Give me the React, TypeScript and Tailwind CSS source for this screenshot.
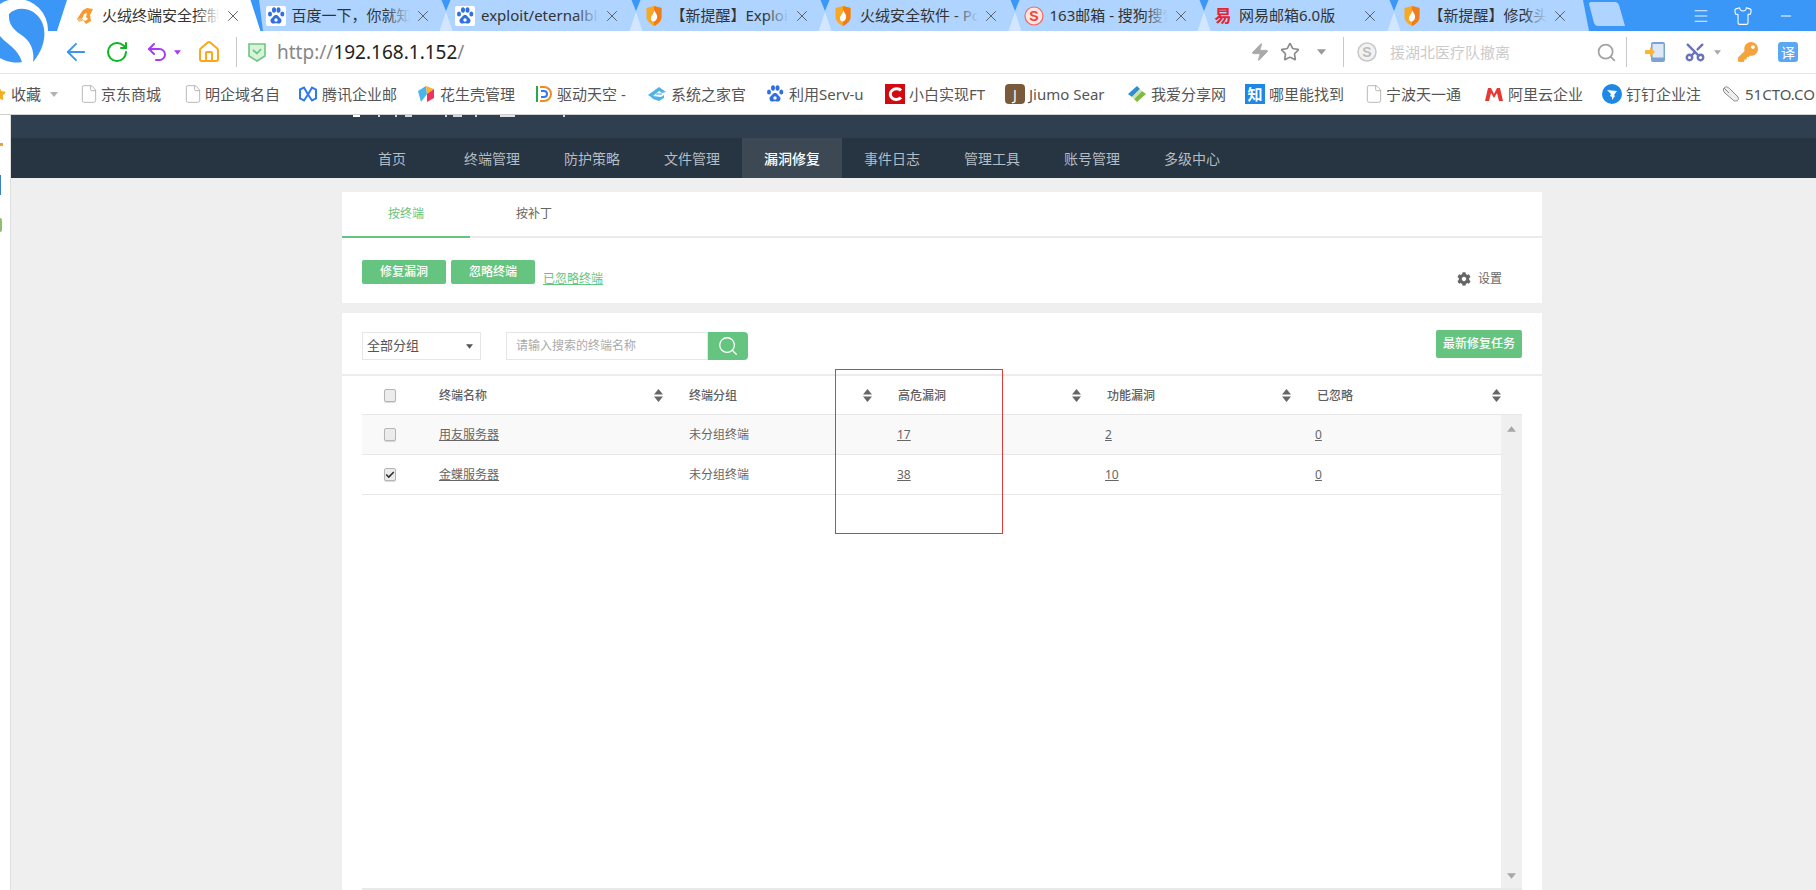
import { ArrowLeft, Check, File, Home, Menu, Minus, RotateCw, Scissors, Search, Shirt, Star, Undo2, X, Zap } from "lucide-react";
import { FaCog, FaKey } from "react-icons/fa";
import type { ReactNode } from "react";

const Paw = () => (
  <svg viewBox="0 0 20 20" className="w-5 h-5 shrink-0">
    <rect width="20" height="20" rx="2" fill="#fff" />
    <g fill="#2f6fe0">
      <ellipse cx="4" cy="8" rx="2" ry="2.6" />
      <ellipse cx="8" cy="4" rx="2" ry="2.8" />
      <ellipse cx="12.5" cy="4" rx="2" ry="2.8" />
      <ellipse cx="16.3" cy="8" rx="2" ry="2.6" />
      <path d="M10 9c-2.5 0-3 2.500-4.500 3.500C3.500 14 4.500 18 8 17.500c1.500-.2 2.500-.2 4 0 3.500.5 4.500-3.500 2.500-5C13 11.500 12.500 9 10 9z" />
    </g>
    <circle cx="10" cy="14" r="1.700" fill="#fff" />
  </svg>
);

const Flame = ({ blur }: { blur?: boolean }) => (
  <svg viewBox="0 0 18 20" className="w-[18px] h-5 shrink-0 mr-[2px]">
    {blur ? (
      <>
        <path d="M1 13 7 4l4-2 6 1-3 6 1 6-5 3-3-4-4 1z" fill="#fb9a2c" />
        <path d="M6 13l2-5 3-1-1 4 2 2-3 2z" fill="#fff" />
        <path d="M1 13l4-1 2 3-4 1z" fill="#f7c07a" />
      </>
    ) : (
      <>
        <path d="M1.500 2 9 0l7.500 2v9c0 4-3.500 7-7.500 9-4-2-7.500-5-7.500-9z" fill="#f9a825" />
        <path d="M16.500 2v9c0 4-3.500 7-7.500 9V0z" fill="#ef7d1a" />
        <path d="M9.500 4c.5 3 3.500 4.500 2.500 8-.5 2-2 3.500-3.500 3.500S5.500 14 6 11.500C6.500 9 9 7.500 9.500 4z" fill="#fff" />
      </>
    )}
  </svg>
);

const SogouMail = () => (
  <svg viewBox="0 0 20 20" className="w-5 h-5 shrink-0">
    <circle cx="10" cy="10" r="9" fill="#fde5e3" stroke="#f2645c" strokeWidth="1.200" />
    <text x="10" y="15" textAnchor="middle" fontSize="14" fontWeight="700" fill="#f0423a" fontFamily="Liberation Sans">S</text>
  </svg>
);

const NetEase = () => (
  <span className="w-5 shrink-0 text-center text-[17px] font-bold leading-5 text-[#e5232f]">易</span>
);

const tabs: { title: string; icon: ReactNode; fade: string }[] = [
  { title: "火绒终端安全控制台", icon: <Flame blur />, fade: "to-white" },
  { title: "百度一下，你就知道", icon: <Paw />, fade: "to-[#aed4ff]" },
  { title: "exploit/eternalblue", icon: <Paw />, fade: "to-[#aed4ff]" },
  { title: "【新提醒】Exploit", icon: <Flame />, fade: "to-[#aed4ff]" },
  { title: "火绒安全软件 - Power", icon: <Flame />, fade: "to-[#aed4ff]" },
  { title: "163邮箱 - 搜狗搜索", icon: <SogouMail />, fade: "to-[#aed4ff]" },
  { title: "网易邮箱6.0版", icon: <NetEase />, fade: "to-[#aed4ff]" },
  { title: "【新提醒】修改头像", icon: <Flame />, fade: "to-[#aed4ff]" },
];

const DocIcon = () => <File className="w-5 h-[22px] shrink-0 -mr-[2px] text-[#a9a9a9]" strokeWidth={1} />;

const bookmarks: { label: string; icon: ReactNode; cls: string }[] = [
  { label: "京东商城", icon: <DocIcon />, cls: "w-[104px]" },
  { label: "明企域名自", icon: <DocIcon />, cls: "w-[115px]" },
  {
    label: "腾讯企业邮",
    icon: (
      <svg viewBox="0 0 20 20" className="w-5 h-5 shrink-0" fill="none" stroke="#2f7cf0" strokeWidth="2">
        <path d="M2 5.500 6 3.500l4 7 4-7 4 2v9l-4 2-4-6-4 6-4-2z" />
      </svg>
    ),
    cls: "w-[118px]",
  },
  {
    label: "花生壳管理",
    icon: (
      <svg viewBox="0 0 20 20" className="w-5 h-5 shrink-0">
        <path d="M2 7 10 2l1 8-6 8z" fill="#4ab4ee" />
        <path d="M10 2l8 3-7 5z" fill="#f7b52c" />
        <path d="M18 5v9l-7 4V10z" fill="#f2305f" />
      </svg>
    ),
    cls: "w-[117px]",
  },
  {
    label: "驱动天空 -",
    icon: (
      <svg viewBox="0 0 20 20" className="w-5 h-5 shrink-0" fill="none" strokeWidth="2">
        <path d="M4 2v16" stroke="#2aa84a" />
        <path d="M7 3h4a7 7 0 0 1 0 14H7" stroke="#f08a24" />
        <path d="M8 7h3a3 3 0 0 1 0 6H8" stroke="#2f7cf0" />
      </svg>
    ),
    cls: "w-[114px]",
  },
  {
    label: "系统之家官",
    icon: (
      <svg viewBox="0 0 20 20" className="w-5 h-5 shrink-0">
        <path d="M1 11 12 3l7 5-4 1-3-2-6 5 8 1 3-2v3l-5 3-6-2-2-2z" fill="#4eb3e8" />
        <path d="M9 9h6v2H9z" fill="#9bd3ef" />
      </svg>
    ),
    cls: "w-[118px]",
  },
  { label: "利用Serv-u", icon: <Paw />, cls: "w-[120px]" },
  {
    label: "小白实现FT",
    icon: (
      <svg viewBox="0 0 20 20" className="w-5 h-5 shrink-0">
        <rect width="20" height="20" fill="#d10a12" />
        <path d="M16 6.500C14 4 9.500 4 7 6.500s-2 5.500 0 7.500 7 2 9-.5" fill="none" stroke="#fff" strokeWidth="3" />
      </svg>
    ),
    cls: "w-[120px]",
  },
  {
    label: "Jiumo Sear",
    icon: (
      <span className="flex w-5 h-5 shrink-0 items-center justify-center rounded-sm bg-[#7a5a3a] text-[14px] text-white">J</span>
    ),
    cls: "w-[122px]",
  },
  {
    label: "我爱分享网",
    icon: (
      <svg viewBox="0 0 20 20" className="w-5 h-5 shrink-0">
        <path d="M1 10 10 2l3 3-8 8z" fill="#2e8fd0" />
        <path d="M7 15l8-8 4 3-9 8z" fill="#7dbb42" />
        <path d="M5 13l8-8 2 2-8 8z" fill="#cfe3a8" />
      </svg>
    ),
    cls: "w-[118px]",
  },
  {
    label: "哪里能找到",
    icon: <span className="flex w-5 h-5 shrink-0 items-center justify-center bg-[#1e88e5] text-[15px] font-bold text-white">知</span>,
    cls: "w-[119px]",
  },
  { label: "宁波天一通", icon: <DocIcon />, cls: "w-[120px]" },
  {
    label: "阿里云企业",
    icon: (
      <svg viewBox="0 0 20 20" className="w-5 h-5 shrink-0" fill="#e53935">
        <path d="M1 17 4 4h3l3 6 3-6h3l3 13h-4l-2-8-3 5-3-5-2 8z" />
      </svg>
    ),
    cls: "w-[118px]",
  },
  {
    label: "钉钉企业注",
    icon: (
      <svg viewBox="0 0 20 20" className="w-5 h-5 shrink-0">
        <circle cx="10" cy="10" r="10" fill="#1e88e5" />
        <path d="M5 6l10 1-3 4 1 1-3 4v-3l-2-1 1-2z" fill="#fff" />
      </svg>
    ),
    cls: "w-[119px]",
  },
  {
    label: "51CTO.COM",
    icon: (
      <svg viewBox="0 0 20 20" className="w-5 h-5 shrink-0" fill="#eee" stroke="#888" strokeWidth="1">
        <path d="M3 4c2-2 4-1 6 1l8 8c1 2 0 4-2 4-1 0-2 0-3-1L4 9C2 7 2 5 3 4z" />
        <path d="M3 4l5 5" />
      </svg>
    ),
    cls: "w-[100px]",
  },
];

const navItems = ["首页", "终端管理", "防护策略", "文件管理", "漏洞修复", "事件日志", "管理工具", "账号管理", "多级中心"];

// tails of the title that is scrolled away under the browser chrome
const titleBits = [
  "ml-[342px] w-[7px] bg-white",
  "ml-[18px] w-[2px] bg-[#cfd8e0]",
  "ml-[15px] w-[2px] bg-[#cfd8e0]",
  "ml-[8px] w-[7px] bg-[#cfd8e0]",
  "ml-[33px] w-[2px] bg-[#cfd8e0]",
  "ml-[6px] w-[9px] bg-[#cfd8e0]",
  "ml-[13px] w-[2px] bg-[#cfd8e0]",
  "ml-[23px] w-[15px] bg-[#dfe3e6]",
  "ml-[48px] w-[2px] bg-[#cfd8e0]",
];

const rows = [
  { name: "用友服务器", group: "未分组终端", high: "17", func: "2", ignored: "0", checked: false, bg: "bg-[#f9f9f9]" },
  { name: "金蝶服务器", group: "未分组终端", high: "38", func: "10", ignored: "0", checked: true, bg: "bg-white" },
];

const Caret = ({ className }: { className: string }) => (
  <svg viewBox="0 0 8 5" className={className} fill="currentColor">
    <path d="M0 0h8L4 5z" />
  </svg>
);

const SortIcon = () => (
  <svg viewBox="0 0 9 13" className="w-[9px] h-[13px] shrink-0" fill="#666">
    <path d="M4.500 0 9 5.500H0zM0 7.500h9L4.500 13z" />
  </svg>
);

const CheckBox = ({ checked }: { checked?: boolean }) => (
  <div className="flex w-[12px] h-[13px] items-center justify-center rounded-[2px] border border-[#b5b5b5] bg-[#ececec] shadow-[0_1px_1px_rgba(0,0,0,0.15)]">
    {checked && <Check className="w-[10px] h-[10px] text-[#333]" strokeWidth={4} />}
  </div>
);

const HeadCell = ({ label, cls }: { label: string; cls: string }) => (
  <div className={`flex items-center justify-between pr-[14px] ${cls}`}>
    <span className="font-medium text-[#5f5f5f]">{label}</span>
    <SortIcon />
  </div>
);

const App = () => {
  return (
    <div className="relative flex h-screen flex-col overflow-hidden bg-white font-['Noto_Sans','Noto_Sans_CJK_SC',sans-serif]">
      {/* Logo */}
      <svg viewBox="0 0 52 66" className="absolute left-0 top-0 z-20 w-[52px] h-[66px]">
        <circle cx="17" cy="30" r="31" fill="#fff" />
        <path d="M9 14C16 6 34 6 42 22c6 14 0 30-9 40 2-12-3-22-13-28C14 30 8 24 9 14z" fill="#3b96f6" />
        <path d="M0 36c6 8 18 12 22 26-10 2-18-2-22-4z" fill="#3b96f6" />
      </svg>

      {/* Tabs */}
      <div className="flex h-[31px] shrink-0 bg-[#3a96f7] pl-[67px] text-[15px] text-[#333]">
        {tabs.map((tab, i) => (
          <div key={i} className={`relative flex w-[189.5px] shrink-0 items-center pl-[9px] ${i === 0 ? "bg-white" : "bg-[#aed4ff]"}`}>
            {i === 0 && (
              <svg viewBox="0 0 10 31" className="absolute right-full top-0 w-[10px] h-[31px]">
                <path d="M0 31 10 0v31z" fill="#fff" />
              </svg>
            )}
            {tab.icon}
            <div className="relative ml-[6px] w-[118px] overflow-hidden whitespace-nowrap">
              {tab.title}
              <div className={`absolute inset-y-0 right-0 w-[24px] bg-linear-to-r from-transparent ${tab.fade}`} />
            </div>
            <X className="ml-[4px] w-[18px] h-[18px] text-[#555]" strokeWidth={1.200} />
            {i === 0 ? (
              <svg viewBox="0 0 20 31" className="absolute left-full top-0 z-10 -ml-[10px] w-5 h-[31px]">
                <path d="M0 0h3.500l10 31H0z" fill="#fff" />
                <path d="M3.500 0H12l4 31h-2.500z" fill="#3a96f7" />
              </svg>
            ) : i < tabs.length - 1 ? (
              <svg viewBox="0 0 20 31" className="absolute left-full top-0 z-10 -ml-[10px] w-5 h-[31px]">
                <path d="M5.500 0h9L10 11z" fill="#3a96f7" />
                <path d="M10 12l6.500 19h-13z" fill="#d2e6ff" />
              </svg>
            ) : (
              <svg viewBox="0 0 8 31" className="absolute left-full top-0 w-2 h-[31px]">
                <path d="M0 0v31h6z" fill="#aed4ff" />
              </svg>
            )}
          </div>
        ))}
        <svg viewBox="0 0 38 24" className="ml-[6px] mt-[2px] w-[38px] h-[24px] shrink-0">
          <path d="M2 0h24c2 0 3 1 4 3l6 21H9c-2 0-3-1-4-3L0 2c0-1 1-2 2-2z" fill="#aed4ff" />
        </svg>
        <div className="ml-auto flex items-center pr-[22px] text-white">
          <Menu className="w-[18px] h-[18px]" strokeWidth={1.200} />
          <Shirt className="ml-[23px] w-[20px] h-[20px]" strokeWidth={1.300} />
          <Minus className="ml-[25px] w-[16px] h-[16px]" strokeWidth={1.500} />
        </div>
      </div>

      {/* Toolbar */}
      <div className="flex h-[43px] shrink-0 items-center border-b border-[#e3e3e3] pl-[62px] pr-[18px]">
        <ArrowLeft className="w-[28px] h-[28px] shrink-0 text-[#3b95f5]" strokeWidth={1.600} />
        <RotateCw className="ml-[15px] w-[24px] h-[24px] shrink-0 text-[#0cb61f]" strokeWidth={2} />
        <Undo2 className="ml-[16px] w-[24px] h-[24px] shrink-0 text-[#a63cf2]" strokeWidth={2} />
        <Caret className="ml-[5px] w-[7px] h-[5px] shrink-0 text-[#a63cf2]" />
        <Home className="ml-[16px] w-[24px] h-[24px] shrink-0 text-[#ffa414]" strokeWidth={1.900} />
        <div className="ml-[15px] h-[30px] w-px shrink-0 bg-[#c9c9c9]" />
        <svg viewBox="0 0 18 20" className="ml-[11px] w-[18px] h-[20px] shrink-0">
          <path d="M1 2h16v12l-8 5-8-5z" fill="#d9f2dc" stroke="#6cc77c" strokeWidth="1.600" />
          <path d="M5 8l4 3.500L13 7" fill="none" stroke="#6cc77c" strokeWidth="1.800" />
        </svg>
        <div className="ml-[11px] w-[973px] shrink-0 text-[19px] text-[#222]">
          <span className="text-[#888]">http://</span>192.168.1.152<span className="text-[#888]">/</span>
        </div>
        <Zap className="w-[20px] h-[20px] shrink-0 text-[#a9a9a9]" fill="#a9a9a9" strokeWidth={1} />
        <Star className="ml-[10px] w-[20px] h-[20px] shrink-0 text-[#8c8c8c]" strokeWidth={2} />
        <Caret className="ml-[17px] w-[9px] h-[6px] shrink-0 text-[#9a9a9a]" />
        <div className="ml-[17px] h-[30px] w-px shrink-0 bg-[#c9c9c9]" />
        <svg viewBox="0 0 20 20" className="ml-[13px] w-5 h-5 shrink-0">
          <circle cx="10" cy="10" r="9" fill="#f2f2f2" stroke="#c8c8c8" strokeWidth="1.500" />
          <text x="10" y="15" textAnchor="middle" fontSize="14" fontWeight="700" fill="#bdbdbd" fontFamily="Liberation Sans">S</text>
        </svg>
        <div className="ml-[13px] flex-1 text-[15px] text-[#cbcbcb]">援湖北医疗队撤离</div>
        <Search className="w-[21px] h-[21px] shrink-0 text-[#a3a3a3]" strokeWidth={2} />
        <div className="ml-[9px] h-[30px] w-px shrink-0 bg-[#c9c9c9]" />
        <svg viewBox="0 0 20 20" className="ml-[18px] w-5 h-5 shrink-0">
          <rect x="6" y="0" width="14" height="20" rx="2" fill="#7ba2d3" />
          <rect x="7.500" y="2" width="11" height="13.500" fill="#dce8f7" />
          <path d="M0 8h5V5l5 5-5 5v-3H0z" fill="#f7b53c" />
        </svg>
        <Scissors className="ml-[19px] w-[22px] h-[22px] shrink-0 text-[#6a73bd] -rotate-90" strokeWidth={2.600} />
        <Caret className="ml-[8px] w-[7px] h-[5px] shrink-0 text-[#a9a9a9]" />
        <FaKey className="ml-[17px] w-[20px] h-[20px] shrink-0 text-[#f5a33c]" />
        <div className="ml-[20px] flex w-5 h-5 shrink-0 items-center justify-center rounded-[3px] bg-[#5aa7f4] text-[14px] text-white">译</div>
      </div>

      {/* Bookmarks */}
      <div className="flex h-[41px] shrink-0 items-center border-b border-[#cfcfcf] text-[15px] text-[#555]">
        <Star className="-ml-[8px] w-[14px] h-[14px] shrink-0 text-[#f2b01e]" fill="#f2b01e" />
        <span className="ml-[5px] shrink-0">收藏</span>
        <Caret className="ml-[9px] mr-[21px] w-[8px] h-[5px] shrink-0 text-[#b3b3b3]" />
        {bookmarks.map((b) => (
          <div key={b.label} className={`flex shrink-0 items-center gap-[4px] whitespace-nowrap ${b.cls}`}>
            {b.icon}
            <span>{b.label}</span>
          </div>
        ))}
      </div>

      {/* Page */}
      <div className="flex min-h-0 flex-1">
        <div className="relative w-[11px] shrink-0 border-r border-[#dedede] bg-white">
          <div className="absolute left-0 top-[28px] h-[3px] w-[3px] bg-[#e8a33d]" />
          <div className="absolute left-0 top-[60px] h-[20px] w-[1px] bg-[#3b82c4]" />
          <div className="absolute left-0 top-[103px] h-[14px] w-[2px] rounded-r-full bg-[#8ebf6f]" />
        </div>
        <div className="flex min-w-0 flex-1 flex-col bg-[#efefef] text-[12px] text-[#666]">
          {/* Header */}
          <div className="flex h-[23px] shrink-0 items-start bg-[#2f3f4f]">
            {titleBits.map((cls, i) => (
              <div key={i} className={`h-[2px] ${cls}`} />
            ))}
          </div>
          <div className="flex h-[40px] shrink-0 bg-[#273441] pl-[331px] text-[14px] text-[#b4bcc4]">
            {navItems.map((item) => (
              <div
                key={item}
                className={`flex w-[100px] items-center justify-center ${item === "漏洞修复" ? "bg-[#3c4853] font-medium text-white" : ""}`}
              >
                {item}
              </div>
            ))}
          </div>

          <div className="ml-[331px] flex min-h-0 w-[1200px] flex-1 flex-col gap-[10px] pt-[14px]">
            {/* Tab panel */}
            <div className="h-[111px] shrink-0 bg-white">
              <div className="flex h-[46px] border-b-2 border-[#e8ecef]">
                <div className="flex h-[46px] w-[128px] items-center justify-center border-b-2 border-[#65c580] text-[#65c580]">按终端</div>
                <div className="flex h-[44px] w-[128px] items-center justify-center">按补丁</div>
              </div>
              <div className="flex pl-[20px] pr-[40px] pt-[22px]">
                <button className="h-[24px] w-[84px] rounded-[2px] bg-[#65c580] font-medium text-white">修复漏洞</button>
                <button className="ml-[5px] h-[24px] w-[84px] rounded-[2px] bg-[#65c580] font-medium text-white">忽略终端</button>
                <a className="ml-[8px] mt-[10px] text-[#65c580] underline">已忽略终端</a>
                <div className="ml-auto mt-[10px] flex items-center gap-[7px]">
                  <FaCog className="w-[14px] h-[14px] text-[#666]" />
                  <span>设置</span>
                </div>
              </div>
            </div>

            {/* Table panel */}
            <div className="relative flex min-h-0 flex-1 flex-col bg-white">
              <div className="flex h-[63px] shrink-0 border-b-2 border-[#ececec] pl-[20px] pr-[20px]">
                <div className="mt-[19px] flex h-[28px] w-[119px] items-center justify-between border border-[#e4e7ea] pl-[4px] pr-[7px] text-[13px] text-[#555]">
                  全部分组
                  <Caret className="w-[7px] h-[7px] text-[#555]" />
                </div>
                <div className="ml-[25px] mt-[19px] flex h-[28px] w-[202px] items-center border border-[#e4e7ea] pl-[9px] text-[#aaa]">
                  请输入搜索的终端名称
                </div>
                <div className="mt-[19px] flex h-[28px] w-[40px] items-center justify-center rounded-r-[4px] bg-[#65c580]">
                  <Search className="w-[22px] h-[22px] text-white" strokeWidth={1.400} />
                </div>
                <button className="ml-auto mt-[17px] h-[28px] w-[86px] rounded-[2px] bg-[#65c580] font-medium text-white">最新修复任务</button>
              </div>

              <div className="ml-[20px] flex h-[39px] w-[1160px] shrink-0 items-center border-b border-[#e7e7e7] pt-[1px]">
                <div className="w-[65px] pl-[22px]">
                  <CheckBox />
                </div>
                <HeadCell label="终端名称" cls="w-[250px] pl-[12px]" />
                <HeadCell label="终端分组" cls="w-[209px] pl-[12px]" />
                <HeadCell label="高危漏洞" cls="w-[209px] pl-[12px]" />
                <HeadCell label="功能漏洞" cls="w-[210px] pl-[12px]" />
                <HeadCell label="已忽略" cls="w-[210px] pl-[12px]" />
              </div>

              <div className="ml-[20px] flex min-h-0 w-[1160px] flex-1 border-b-2 border-[#e9e9e9]">
                <div className="min-w-0 flex-1">
                  {rows.map((r) => (
                    <div key={r.name} className={`flex h-[40px] items-center border-b border-[#e7e7e7] ${r.bg}`}>
                      <div className="w-[65px] pl-[22px]">
                        <CheckBox checked={r.checked} />
                      </div>
                      <a className="w-[250px] pl-[12px] underline">{r.name}</a>
                      <div className="w-[208px] pl-[12px]">{r.group}</div>
                      <a className="w-[208px] pl-[12px] underline">{r.high}</a>
                      <a className="w-[210px] pl-[12px] underline">{r.func}</a>
                      <a className="pl-[12px] underline">{r.ignored}</a>
                    </div>
                  ))}
                </div>
                <div className="flex w-[21px] shrink-0 flex-col items-center justify-between bg-[#efefef] pb-[9px] pt-[11px] text-[#a6a6a6]">
                  <Caret className="w-[9px] h-[6px] rotate-180" />
                  <Caret className="w-[9px] h-[6px]" />
                </div>
              </div>

              {/* Red annotation box */}
              <div className="absolute left-[493px] top-[56px] h-[165px] w-[168px] border border-[#e53935]" />
            </div>
          </div>
        </div>
      </div>
    </div>
  );
};

export default App;
